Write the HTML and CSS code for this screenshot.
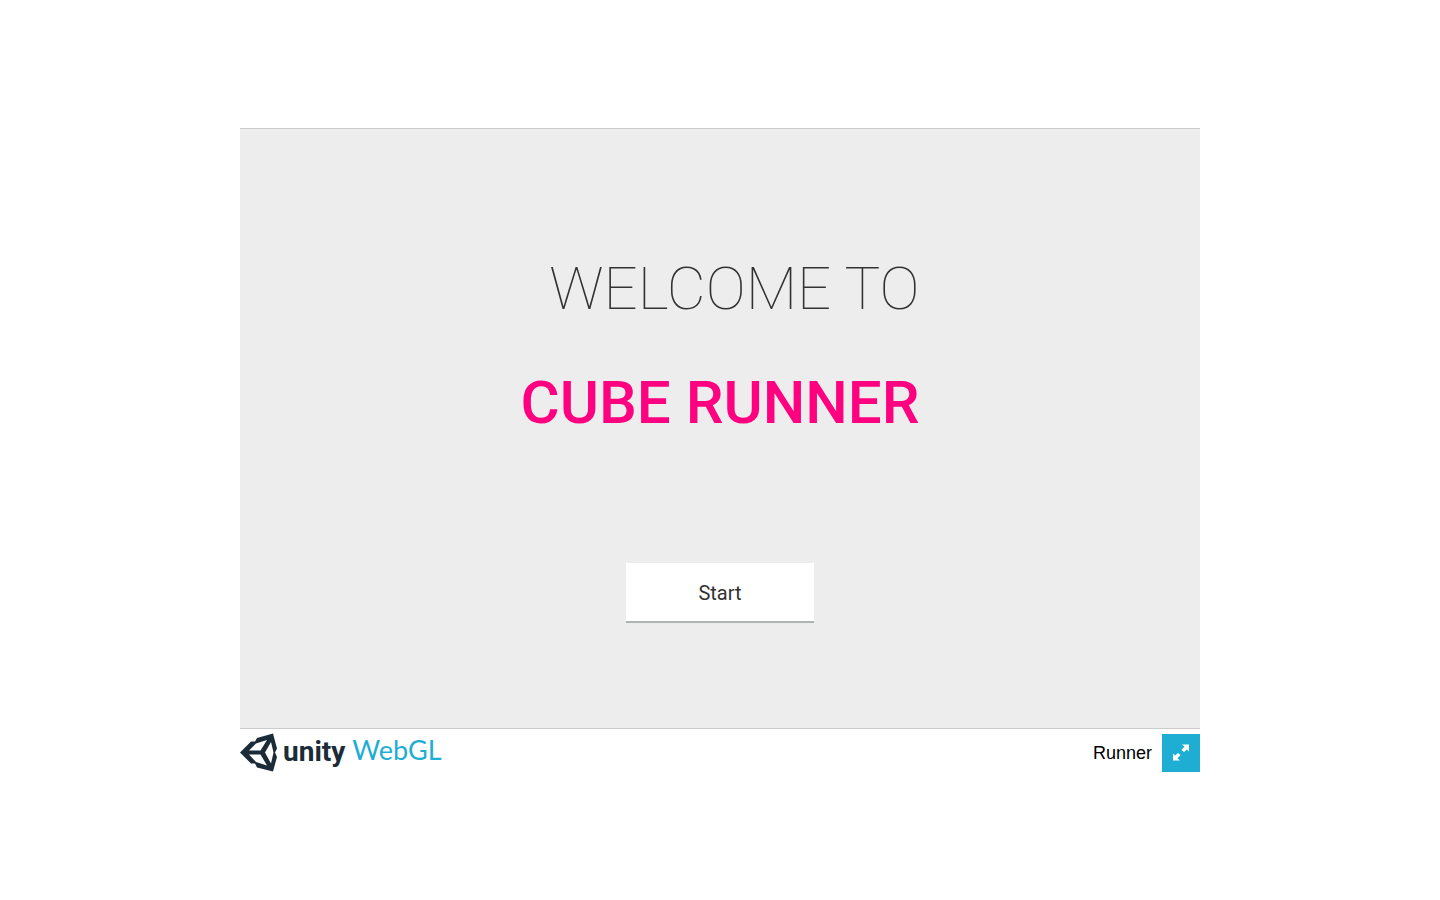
FILE: index.html
```html
<!DOCTYPE html>
<html lang="en">
<head>
<meta charset="utf-8">
<title>Unity WebGL Player | Runner</title>
<link rel="stylesheet" href="styles.css">
</head>
<body>
<main class="player">
  <section class="stage">
    <h1 class="heading">
      <span class="welcome">WELCOME TO</span>
      <span class="name">CUBE RUNNER</span>
    </h1>
    <button class="start" type="button">Start</button>
  </section>
  <footer class="footer">
    <div class="brand">
      <svg class="mark" viewBox="0 0 38 38" aria-hidden="true">
        <path fill="#1b2c38" fill-rule="evenodd" d="M33 -0.500L17 4L15 7.500H11L0 18.500L11 29.500H15L17 33.500L33 37.500L37 23L35 18.500L37 14.500ZM27 6L20.500 16.500H9L16 9.500ZM31 8L33.500 18.500L31 29.500L25 18.500ZM9 20.500H20.500L27 31.500L16 28Z"/>
      </svg>
      <span class="unity">unity</span>
      <span class="webgl">WebGL</span>
    </div>
    <div class="tools">
      <span class="title">Runner</span>
      <button class="fullscreen" type="button" aria-label="Fullscreen">
        <svg class="arrows" viewBox="0 0 38 38" aria-hidden="true">
          <path fill="#fff" d="M20 10.500H27V17.500L25 15.500L22 18L19.500 16L22.500 12.500ZM11 19.500L13 21.500L16 19L18.500 21L15.500 24.500L18 26.500H11Z"/>
        </svg>
      </button>
    </div>
  </footer>
</main>
</body>
</html>
```
FILE: styles.css
```css
* { box-sizing: border-box; }
body {
  margin: 0;
  min-height: 100vh;
  display: grid;
  place-items: center;
  background: #fff;
  font-family: "Liberation Sans", Arial, sans-serif;
}
.player { width: 100%; max-width: 960px; }
.stage {
  display: flex;
  flex-direction: column;
  align-items: center;
  padding: 125px 20px 105px;
  border: solid #ccc;
  border-width: 1px 0;
  background: #ededed;
  font-family: Roboto, sans-serif;
}
.heading {
  display: flex;
  flex-direction: column;
  align-items: flex-end;
  gap: 44px;
  margin: 0;
  font-size: 60px;
  line-height: 70px;
}
.welcome { font-weight: 100; color: #323232; }
.name { font-weight: 500; color: #ff0080; }
.start {
  width: 188px;
  height: 60px;
  margin-top: 125px;
  padding: 1px 0 0;
  border: 0;
  border-bottom: 2px solid #b0b5b4;
  background: #fff;
  color: #323232;
  font: 20px/24px Roboto, sans-serif;
}
.footer {
  display: flex;
  justify-content: space-between;
  padding-top: 5px;
}
.brand, .tools { display: flex; align-items: center; height: 38px; }
.brand { align-items: flex-start; }
.mark { width: 38px; height: 38px; overflow: visible; }
.unity {
  margin-left: 5px;
  color: #1b2c38;
  font: 700 28px/36px Roboto, sans-serif;
}
.webgl {
  margin-left: 7px;
  color: #1eaed3;
  font: 400 27px/32px Lato, sans-serif;
}
.tools { gap: 10px; }
.title { font-size: 18px; line-height: 38px; }
.fullscreen {
  width: 38px;
  height: 38px;
  padding: 0;
  border: 0;
  background: #1eaed3;
}
.arrows { display: block; width: 38px; height: 38px; }
```
